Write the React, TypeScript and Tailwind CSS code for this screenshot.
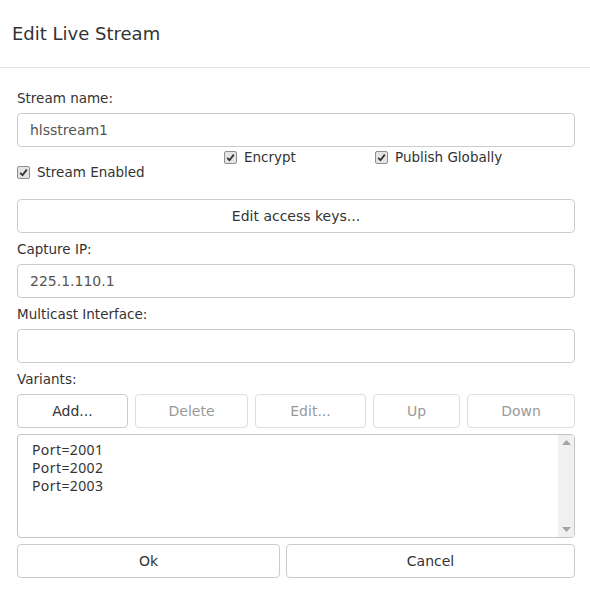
function Check({ label }: { label: string }) {
  return (
    <label className="flex items-center h-[18px] text-[13.5px] text-[#333]">
      <span className="w-[13px] h-[13px] mr-[7px] rounded-[2px] border border-[#8f8f8f] bg-[#e4e4e4] flex items-center justify-center">
        <svg width="9" height="9" viewBox="0 0 9 9">
          <path d="M1.2 4.8 L3.5 7.2 L7.8 1.6" fill="none" stroke="#333" strokeWidth="1.8" />
        </svg>
      </span>
      {label}
    </label>
  );
}

function Label({ text }: { text: string }) {
  return <div className="mt-[7px] mb-[6px] h-[18px] leading-[18px] text-[13.5px] text-[#333]">{text}</div>;
}

function Field({ label, value }: { label: string; value?: string }) {
  return (
    <>
      <Label text={label} />
      <div className="h-[34px] border border-[#ccc] rounded-[4px] px-[12px] flex items-center text-[14px] text-[#555]">
        {value}
      </div>
    </>
  );
}

function Btn({ label, w, disabled }: { label: string; w: string; disabled?: boolean }) {
  return (
    <button
      className={`${w} h-[34px] border rounded-[4px] bg-white text-[14px] ${
        disabled ? "text-[#999] border-[#ddd]" : "text-[#333] border-[#ccc]"
      }`}
    >
      {label}
    </button>
  );
}

export default function App() {
  return (
    <div className="w-[590px] h-[593px] bg-white" style={{ fontFamily: '"DejaVu Sans", Verdana, sans-serif' }}>
      {/* Header */}
      <div className="h-[68px] border-b border-[#e5e5e5] pl-[12px] flex items-center">
        <h1 className="text-[18px] text-[#333]">Edit Live Stream</h1>
      </div>

      {/* Body */}
      <div className="pl-[17px] pr-[15px] pt-[14px]">
        <Field label="Stream name:" value="hlsstream1" />

        <div className="flex h-[52px] pt-[1px]">
          <div className="w-[207px] pt-[15px]">
            <Check label="Stream Enabled" />
          </div>
          <div className="w-[151px]">
            <Check label="Encrypt" />
          </div>
          <div>
            <Check label="Publish Globally" />
          </div>
        </div>

        <button className="w-full h-[34px] border border-[#ccc] rounded-[4px] bg-white text-[14px] text-[#333]">
          Edit access keys...
        </button>

        <Field label="Capture IP:" value="225.1.110.1" />
        <Field label="Multicast Interface:" />

        <Label text="Variants:" />
        <div className="flex gap-[7px]">
          <Btn label="Add..." w="w-[111px]" />
          <Btn label="Delete" w="w-[113px]" disabled />
          <Btn label="Edit..." w="w-[111px]" disabled />
          <Btn label="Up" w="w-[87px]" disabled />
          <Btn label="Down" w="w-[108px]" disabled />
        </div>

        {/* Variants list */}
        <div className="mt-[6px] h-[104px] border border-[#c4c4c4] rounded-[4px] flex overflow-hidden">
          <div
            className="flex-1 pl-[14px] pt-[6px] text-[14px] leading-[18px] tracking-[0.4px] text-[#333]"
            style={{ fontFamily: '"Noto Sans", "Open Sans", sans-serif' }}
          >
            <div>Port=2001</div>
            <div>Port=2002</div>
            <div>Port=2003</div>
          </div>
          <div className="w-[16px] bg-[#f0f0f0] flex flex-col justify-between items-center py-[5px]">
            <svg width="9" height="5" viewBox="0 0 9 5">
              <path d="M0 5 L4.5 0 L9 5 Z" fill="#a3a3a3" />
            </svg>
            <svg width="9" height="5" viewBox="0 0 9 5">
              <path d="M0 0 L4.5 5 L9 0 Z" fill="#a3a3a3" />
            </svg>
          </div>
        </div>

        <div className="flex gap-[6px] mt-[6px]">
          <Btn label="Ok" w="w-[263px]" />
          <Btn label="Cancel" w="flex-1" />
        </div>
      </div>
    </div>
  );
}
